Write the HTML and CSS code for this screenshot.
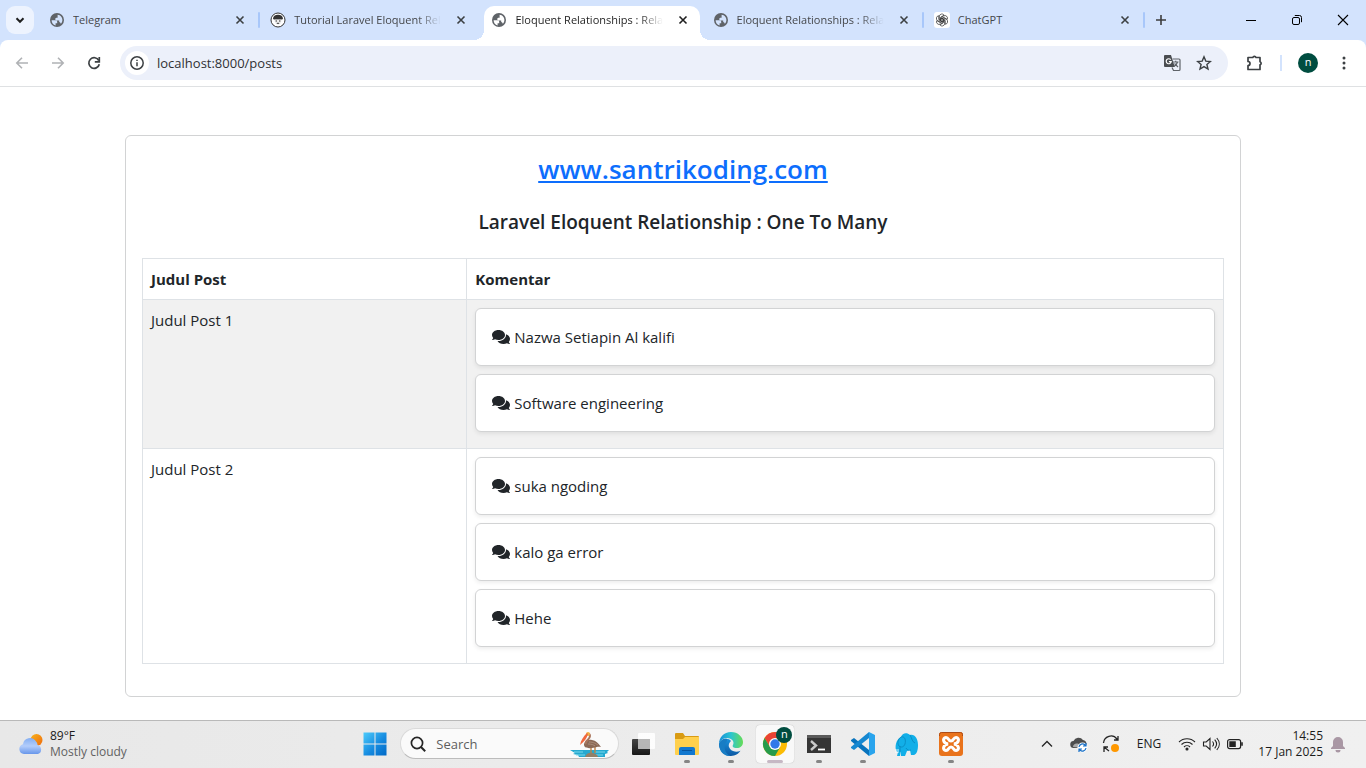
FILE: index.html
```html
<!DOCTYPE html>
<html lang="id">
<head>
<meta charset="utf-8">
<meta name="viewport" content="width=device-width, initial-scale=1">
<title>Eloquent Relationships : Relasi One To Many</title>
<link rel="stylesheet" href="styles.css">
</head>
<body>
<svg class="sprite" aria-hidden="true">
  <symbol id="globe" viewBox="0 0 16 16">
    <circle cx="8" cy="8" r="7" fill="#5f6368"/>
    <path d="M2.600 8.200h3.600c1.300 0 2 .7 2 1.800v1.200H6.600v2.200C4.300 13 2.600 10.800 2.600 8.200zM8.600 2.700c2.800.2 4.800 2.500 4.800 5.300 0 1.500-.6 2.900-1.500 3.800-.3-1.100-1-1.700-1.700-1.900V8.600H7.800c-1 0-1.600-.7-1.600-1.500s.7-1.400 1.500-1.400h.9z" fill="var(--cut)"/>
  </symbol>
  <symbol id="close" viewBox="0 0 16 16"><path d="M4.500 4.500l7 7m0-7l-7 7" stroke="currentColor" stroke-width="1.600" fill="none"/></symbol>
  <symbol id="comments" viewBox="0 0 576 512"><path fill="currentColor" d="M416 192c0-88.400-93.100-160-208-160S0 103.600 0 192c0 34.300 14.100 65.900 38 92-13.400 30.200-35.500 54.200-35.800 54.500-2.200 2.300-2.800 5.700-1.500 8.700S4.800 352 8 352c36.600 0 66.900-12.300 88.700-25 32.200 15.700 70.300 25 111.300 25 114.900 0 208-71.600 208-160zm122 220c23.900-26 38-57.700 38-92 0-66.900-53.500-124.200-129.300-148.100.9 6.600 1.300 13.300 1.300 20.100 0 105.900-107.700 192-240 192-10.800 0-21.300-.8-31.700-1.900C207.800 439.600 281.800 480 368 480c41 0 79.100-9.200 111.300-25 21.800 12.700 52.100 25 88.700 25 3.200 0 6.100-1.900 7.300-4.800 1.300-2.900.7-6.300-1.500-8.700-.3-.3-22.400-24.200-35.800-54.500z"/></symbol>
</svg>

<header class="browser">
  <div class="tabstrip">
    <button class="tab-search" aria-label="Search tabs"><svg width="14" height="14" viewBox="0 0 14 14"><path d="M3.500 5.300L7 8.800l3.500-3.500" fill="none" stroke="#1f1f1f" stroke-width="2"/></svg></button>
    <nav class="tabs" aria-label="Tabs">
      <div class="tab divided"><svg class="icon"><use href="#globe"/></svg><a class="tab-title" href="#">Telegram</a><button class="tab-close" aria-label="Close tab"><svg class="icon"><use href="#close"/></svg></button></div>
      <div class="tab"><svg class="icon" viewBox="0 0 16 16"><circle cx="8" cy="8" r="7" fill="#fff" stroke="#333" stroke-width="1"/><path d="M3 7c.2-3 2-4.300 5-4.300S12.800 4 13 7l-1.600.8H4.600z" fill="#333"/><path d="M4.400 7.500h7.200c0 3.300-1.400 5.200-3.600 5.200S4.400 10.800 4.400 7.500z" fill="#eee"/><circle cx="6.200" cy="9" r=".7" fill="#333"/><circle cx="9.800" cy="9" r=".7" fill="#333"/><path d="M6.800 11.300h2.400" stroke="#333"/></svg><a class="tab-title faded" href="#">Tutorial Laravel Eloquent Rel</a><button class="tab-close" aria-label="Close tab"><svg class="icon"><use href="#close"/></svg></button></div>
      <div class="tab active"><svg class="icon"><use href="#globe"/></svg><a class="tab-title faded" href="#" aria-current="page">Eloquent Relationships : Rela</a><button class="tab-close" aria-label="Close tab"><svg class="icon"><use href="#close"/></svg></button></div>
      <div class="tab divided"><svg class="icon"><use href="#globe"/></svg><a class="tab-title faded" href="#">Eloquent Relationships : Rela</a><button class="tab-close" aria-label="Close tab"><svg class="icon"><use href="#close"/></svg></button></div>
      <div class="tab divided"><svg class="icon" viewBox="0 0 16 16"><rect width="16" height="16" rx="3" fill="#fff"/><g fill="none" stroke="#333" stroke-width=".7"><path id="petal" d="M8 9.800L5.300 8.200V4.500a2.600 2.600 0 0 1 4.800-1.300L6.900 5v4.200"/><use href="#petal" transform="rotate(60 8 8)"/><use href="#petal" transform="rotate(120 8 8)"/><use href="#petal" transform="rotate(180 8 8)"/><use href="#petal" transform="rotate(240 8 8)"/><use href="#petal" transform="rotate(300 8 8)"/></g></svg><a class="tab-title" href="#">ChatGPT</a><button class="tab-close" aria-label="Close tab"><svg class="icon"><use href="#close"/></svg></button></div>
    </nav>
    <button class="new-tab" aria-label="New tab"><svg class="icon" viewBox="0 0 16 16"><path d="M8 3v10M3 8h10" stroke="#3c3c3c" stroke-width="1.600"/></svg></button>
    <div class="window-controls">
      <button aria-label="Minimize"><svg width="12" height="12" viewBox="0 0 12 12"><path d="M1 6.500h10" stroke="#000"/></svg></button>
      <button aria-label="Restore"><svg width="12" height="12" viewBox="0 0 12 12" fill="none" stroke="#000"><rect x="1.500" y="3.500" width="7" height="7" rx="1.500"/><path d="M3.800 1.500H8.500a2 2 0 0 1 2 2v4.700"/></svg></button>
      <button aria-label="Close window"><svg width="12" height="12" viewBox="0 0 12 12"><path d="M1 1l10 10M11 1L1 11" stroke="#000" stroke-width="1.100"/></svg></button>
    </div>
  </div>
  <div class="toolbar">
    <button class="nav-button" aria-label="Back" disabled><svg class="icon" viewBox="0 0 16 16"><path d="M14 8H3M8 2.800L2.800 8 8 13.200" fill="none" stroke="#b0b2b5" stroke-width="1.600"/></svg></button>
    <button class="nav-button" aria-label="Forward" disabled><svg class="icon" viewBox="0 0 16 16"><path d="M2 8h11M8 2.800L13.200 8 8 13.200" fill="none" stroke="#b0b2b5" stroke-width="1.600"/></svg></button>
    <button class="nav-button" aria-label="Reload"><svg class="icon" viewBox="0 0 16 16"><path d="M12.800 5.500A5.300 5.300 0 1 0 13.300 9.200" fill="none" stroke="#3c4043" stroke-width="1.700"/><path d="M13.300 2v4.800H8.800" fill="none" stroke="#3c4043" stroke-width="1.700"/></svg></button>
    <div class="omnibox">
      <button class="site-info" aria-label="Site information"><svg class="icon" viewBox="0 0 16 16"><circle cx="8" cy="8" r="6.200" fill="none" stroke="#3c4043" stroke-width="1.500"/><path d="M8 7.300v3.900M8 4.700v1.400" stroke="#3c4043" stroke-width="1.500"/></svg></button>
      <input class="address" type="text" value="localhost:8000/posts" aria-label="Address">
      <button class="omni-button" aria-label="Translate this page"><svg width="18" height="18" viewBox="0 0 18 18"><path d="M2 1h6l3.800 12H2a1 1 0 0 1-1-1V2a1 1 0 0 1 1-1z" fill="#4a4d51"/><path d="M7.700 5.700a2.500 2.500 0 1 0 .5 2H5.900" fill="none" stroke="#fff" stroke-width="1.200"/><path d="M9.500 5H16a1 1 0 0 1 1 1v9.500a1 1 0 0 1-1 1h-5.500L9 13.500M10 8h5.500M12.700 6.800V8M14.500 8c-.5 2-1.800 3.500-3.500 4.500M11.500 9.500l3.500 3.500" fill="none" stroke="#5f6368" stroke-width="1.200"/></svg></button>
      <button class="omni-button" aria-label="Bookmark this tab"><svg class="icon" viewBox="0 0 16 16"><path d="M8 1.800l1.800 4.300 4.600.4-3.500 3 1.100 4.500L8 11.600 4 14l1.100-4.500-3.500-3 4.600-.4z" fill="none" stroke="#3c4043" stroke-width="1.400"/></svg></button>
    </div>
    <button class="nav-button" aria-label="Extensions"><svg width="18" height="18" viewBox="0 0 18 18"><path d="M2 3.500h4.800a1.700 1.700 0 0 1 3.200 0h4v4.200a1.700 1.700 0 0 1 0 3.200V15.500H2v-4a2 2 0 0 0 0-4z" fill="none" stroke="#3c4043" stroke-width="1.700" stroke-linejoin="round"/></svg></button>
    <span class="toolbar-divider"></span>
    <button class="nav-button" aria-label="Profile"><span class="avatar">n</span></button>
    <button class="nav-button" aria-label="Menu"><svg class="icon" viewBox="0 0 16 16" fill="#3c4043"><circle cx="8" cy="3" r="1.500"/><circle cx="8" cy="8" r="1.500"/><circle cx="8" cy="13" r="1.500"/></svg></button>
  </div>
</header>

<main class="page">
  <section class="container">
    <div class="card">
      <h3 class="site-name"><a href="#">www.santrikoding.com</a></h3>
      <h5 class="subtitle">Laravel Eloquent Relationship : One To Many</h5>
      <table class="posts">
        <thead><tr><th class="post-column" scope="col">Judul Post</th><th scope="col">Komentar</th></tr></thead>
        <tbody>
          <tr><td>Judul Post 1</td><td>
            <div class="comment"><svg class="comment-icon"><use href="#comments"/></svg>Nazwa Setiapin Al kalifi</div>
            <div class="comment"><svg class="comment-icon"><use href="#comments"/></svg>Software engineering</div>
          </td></tr>
          <tr><td>Judul Post 2</td><td>
            <div class="comment"><svg class="comment-icon"><use href="#comments"/></svg>suka ngoding</div>
            <div class="comment"><svg class="comment-icon"><use href="#comments"/></svg>kalo ga error</div>
            <div class="comment"><svg class="comment-icon"><use href="#comments"/></svg>Hehe</div>
          </td></tr>
        </tbody>
      </table>
    </div>
  </section>
</main>

<footer class="taskbar">
  <button class="weather">
    <svg width="24" height="24" viewBox="0 0 24 24"><defs><linearGradient id="sun" x2="1" y2="1"><stop stop-color="#f8b31c"/><stop offset="1" stop-color="#ef6a0c"/></linearGradient><linearGradient id="cloud" x2="0" y2="1"><stop stop-color="#83aef2"/><stop offset=".5" stop-color="#b3cdfb"/><stop offset="1" stop-color="#6796ea"/></linearGradient></defs><circle cx="17.500" cy="8" r="6" fill="url(#sun)"/><path d="M5 22a5 5 0 0 1-1-9.800A7 7 0 0 1 17 9.500c1 1 1.500 2.200 1.500 3.500A4.700 4.700 0 0 1 19 22z" fill="url(#cloud)"/></svg>
    <span class="weather-text"><span>89°F</span><span class="weather-state">Mostly cloudy</span></span>
  </button>
  <nav class="apps" aria-label="Taskbar">
    <button class="app" aria-label="Start"><svg width="24" height="24" viewBox="0 0 24 24"><defs><linearGradient id="win" gradientUnits="userSpaceOnUse" x1="0" y1="0" x2="24" y2="24"><stop stop-color="#4fcdfc"/><stop offset=".55" stop-color="#168be0"/><stop offset="1" stop-color="#0067c5"/></linearGradient></defs><path d="M.5.500h11v11H.5zM12.500.5h11v11h-11zM.5 12.500h11v11H.5zM12.500 12.500h11v11h-11z" fill="url(#win)"/></svg></button>
    <label class="search"><svg class="icon" viewBox="0 0 16 16"><circle cx="7" cy="7" r="5.600" fill="none" stroke="#252525" stroke-width="1.700"/><path d="M11 11l4.200 4.200" stroke="#252525" stroke-width="2"/></svg><input type="search" placeholder="Search" aria-label="Search">
      <svg width="40" height="28" viewBox="0 0 40 28"><path d="M0 20h39l-2 2 1 1-3 1v3H9l-1-2-5-1 2-1z" fill="#25a9d0"/><path d="M4 22h9m12 0h10M6 25h9m11 0h7" stroke="#7bd9ec"/><path d="M15 27c1-4 5-5 8-4s5 2 5 4z" fill="#938068"/><path d="M21 16v7m4-6v6" stroke="#c18243" stroke-width="1.400"/><path d="M14 14c1-3 4-5 8-4 4 .5 6 3 9 7-3-.5-4 0-6 .5-5 1-8 1-10-.5-1-1-1-2-1-3z" fill="#8b6956"/><path d="M19 12c5 0 7 2 9 3m-10-1c4 0 6 1 7 2" fill="none" stroke="#b39582" stroke-width=".8"/><path d="M16 14c-2-3 4-4 4-8 0-2-2-3-3-1" fill="none" stroke="#a9745b" stroke-width="2"/><circle cx="18" cy="4" r="2" fill="#f2b347"/><path d="M18 4c-1 4-4 8-8 11 1-5 3-8 7-12z" fill="#f0683f"/></svg></label>
    <button class="app" aria-label="Task view"><svg width="26" height="26" viewBox="0 0 26 26"><defs><linearGradient id="task" y2="1" x2="0"><stop stop-color="#454545"/><stop offset="1" stop-color="#171717"/></linearGradient></defs><rect x="2" y="8" width="18" height="16" rx="1" fill="url(#task)"/><rect x="8" y="2" width="17" height="16" rx="1" fill="#fff" opacity=".86"/><path d="M8 8h12v10H8z" fill="#aaa" opacity=".8"/></svg></button>
    <button class="app running" aria-label="File Explorer"><svg width="26" height="26" viewBox="0 0 26 26"><path d="M1 3a1 1 0 0 1 1-1h7l2 3h13a1 1 0 0 1 1 1v5H1z" fill="#d99b13"/><path d="M1 8h8l2-2h14v17a1 1 0 0 1-1 1H2a1 1 0 0 1-1-1z" fill="#ffd04d"/><path d="M5 24v-6a2 2 0 0 1 2-2h12a2 2 0 0 1 2 2v6z" fill="#1278cf"/><path d="M8 19h10v1H8z" fill="#07559f"/></svg></button>
    <button class="app running" aria-label="Edge"><svg width="26" height="26" viewBox="0 0 26 26"><defs><linearGradient id="edge-top"><stop stop-color="#168ed9"/><stop offset=".5" stop-color="#2bc5d0"/><stop offset="1" stop-color="#66dc55"/></linearGradient><linearGradient id="edge-low" x2="0" y2="1"><stop stop-color="#1b91db"/><stop offset="1" stop-color="#0c59a4"/></linearGradient></defs><path d="M1 13a12 12 0 0 0 15 11.600c3-.8 5-2.600 6.500-4.900-5 2.200-10 .4-11.500-3.700-1-3 1-5 2-6-3-4-10-2-12 3z" fill="url(#edge-low)"/><path d="M1 13C1 6 6 1 13 1s12 5 12 10c0 4-3 6-6 6-4 0-5-1.500-4-3 2-4-2-7-6-7-4 0-7 3-8 6z" fill="url(#edge-top)"/><path d="M9 10c-4 4-3 12 3 14.800-5 1-11-4-11-11.800C2 9 6 7 9 8z" fill="#187dc4"/></svg></button>
    <button class="app running current" aria-label="Chrome"><svg width="26" height="26" viewBox="0 0 26 26"><circle cx="13" cy="13" r="12" fill="#fbbc05"/><path d="M2.600 7A12 12 0 0 1 23.400 7H13L8 16z" fill="#ea4335"/><path d="M2.600 7A12 12 0 0 0 13 25l5.200-9H8z" fill="#279b4b"/><circle cx="13" cy="13" r="6" fill="#fff"/><circle cx="13" cy="13" r="4.700" fill="#3179e9"/></svg><span class="app-badge">n</span></button>
    <button class="app running" aria-label="Terminal"><svg width="26" height="26" viewBox="0 0 26 26"><path d="M1 5a1 1 0 0 1 1-1h22a1 1 0 0 1 1 1v17H1z" fill="#353535"/><path d="M1 4h24v3H1z" fill="#5a5a5a"/><path d="M5 10l5 4.500L5 19" fill="none" stroke="#c9c9c9" stroke-width="2.400"/><path d="M12 18.500h7" stroke="#fff" stroke-width="1.800"/></svg></button>
    <button class="app running" aria-label="Visual Studio Code"><svg width="26" height="26" viewBox="0 0 26 26"><path d="M19 1l6 3v18l-6 3z" fill="#29a4ed"/><path d="M1 9l3-2 15 12v6L1 10z" fill="#0873bd"/><path d="M1 17l3 2L19 7V1L1 16z" fill="#1688d1"/></svg></button>
    <button class="app" aria-label="HeidiSQL"><svg width="26" height="26" viewBox="0 0 26 26"><path d="M3 21C0 17 2 8 7 6c1-4 6-5 9-2 5-1 8 4 8 10 0 5-1 9-4 10h-3l-1-5-3 1-2 5H7v-5l-1 5H3l1-4z" fill="#12afe8"/><path d="M7 6c4-1 5 3 4 7-1 3-4 4-6 2-2-3-1-7 2-9zm9-2c2 3 2 7 5 8M6 15v6m6-4c1 2 3 3 5 2" fill="none" stroke="#0787bc" stroke-width=".8"/><path d="M2 18v4m2-4v4" stroke="#fff" stroke-width=".8"/></svg></button>
    <button class="app running" aria-label="XAMPP"><svg width="26" height="26" viewBox="0 0 26 26"><rect x="1" y="1" width="24" height="24" rx="3" fill="#e9731c"/><path d="M1.500 5V3.500a2 2 0 0 1 2-2h19a2 2 0 0 1 2 2V5" fill="none" stroke="#ad4b16"/><path d="M10 13C5 12 4 7 8 6.500c3 0 2 3.500 5 3.500s2-3.500 5-3.500c4 .5 3 5.500-2 6.500 5 1 6 6 2 6.500-3 0-2-3.500-5-3.500s-2 3.500-5 3.500c-4-.5-3-5.500 2-6.500z" fill="none" stroke="#fff" stroke-width="3"/></svg></button>
  </nav>
  <div class="tray">
    <button class="tray-button" aria-label="Show hidden icons"><svg width="12" height="12" viewBox="0 0 12 12"><path d="M1 8.500l5-5 5 5" fill="none" stroke="#252525" stroke-width="1.300"/></svg></button>
    <button class="tray-button" aria-label="OneDrive"><svg width="18" height="18" viewBox="0 0 18 18"><path d="M4 13a3.500 3.500 0 0 1-.5-7A5.500 5.500 0 0 1 13 5c2 .2 3.500 2 3.500 4v4z" fill="#4d4d4d"/><path d="M3 12c0-3 4-5 7-2l4 3z" fill="#aaa"/><circle cx="12.500" cy="12.500" r="5" fill="#fff"/><path d="M9 12a3.500 3.500 0 0 1 6-2l1 1m0-3v3h-3m3 2a3.500 3.500 0 0 1-6 2l-1-1m0 3v-3h3" fill="none" stroke="#176fc6" stroke-width="1.200"/></svg></button>
    <button class="tray-button" aria-label="Update available"><svg width="18" height="18" viewBox="0 0 18 18"><path d="M1.500 8A7.500 7.500 0 0 1 15 4l1 1m0-4v4h-4M7 16l-5-4m0 5v-5h4" fill="none" stroke="#252525" stroke-width="1.300"/><circle cx="13" cy="13" r="4" fill="#ff9800"/></svg></button>
    <button class="language">ENG</button>
    <button class="status" aria-label="Network, volume and battery">
      <svg width="18" height="18" viewBox="0 0 18 18" fill="none" stroke="#222" stroke-width="1.100"><path d="M1 7a11.400 11.400 0 0 1 16 0M3.500 9.500a7.800 7.800 0 0 1 11 0M6 12a4.300 4.300 0 0 1 6 0"/><circle cx="9" cy="14" r="1" fill="#222"/></svg>
      <svg width="18" height="18" viewBox="0 0 18 18" fill="none" stroke="#222" stroke-width="1.100"><path d="M1.500 7h2.700L8 3.500v11L4.200 11H1.500zM10.500 6.500c1.300 1.500 1.300 3.500 0 5M12.700 4.700c2.300 2.600 2.300 6 0 8.600M14.800 3c3.300 3.600 3.300 8.400 0 12"/></svg>
      <svg width="18" height="18" viewBox="0 0 18 18"><rect x="1.600" y="4.600" width="13" height="9" rx="2" fill="none" stroke="#222" stroke-width="1.200"/><path d="M3.300 6.300h6.500v5.600H3.300zM15.200 7.200h1.600v3.600h-1.600z" fill="#222"/></svg>
    </button>
    <button class="clock"><span>14:55</span><span>17 Jan 2025</span></button>
    <button class="bell" aria-label="Notifications"><svg width="16" height="18" viewBox="0 0 16 18"><path d="M3 11V7a5 5 0 0 1 10 0v4l2 2v1H1v-1zM5.500 15h5a2.500 2.500 0 0 1-5 0z" fill="#a997a4"/></svg></button>
  </div>
</footer>
</body>
</html>
```
FILE: styles.css
```css
* {
  box-sizing: border-box;
}

body {
  display: flex;
  flex-direction: column;
  min-height: 100vh;
  margin: 0;
  background: #fff;
  color: #212529;
  font: 15px/24px "Open Sans", "Noto Sans", sans-serif;
}

button {
  display: flex;
  align-items: center;
  justify-content: center;
  flex-shrink: 0;
  padding: 0;
  border: 0;
  background: none;
  color: inherit;
  font: inherit;
}

input {
  min-width: 0;
  border: 0;
  outline: 0;
  background: none;
  font: inherit;
}

svg {
  flex-shrink: 0;
}

.sprite {
  display: none;
}

.icon {
  display: block;
  width: 16px;
  height: 16px;
}

/* Browser frame */
.browser {
  background: #d3e3fd;
}

.tabstrip {
  display: flex;
  align-items: stretch;
  height: 40px;
  padding-left: 6px;
  font-size: 11px;
  line-height: 16px;
}

.tab-search {
  align-self: center;
  width: 28px;
  height: 28px;
  margin-right: 6px;
  border-radius: 9px;
  background: #edf3fe;
}

.tabs {
  display: flex;
  flex: 0 1 1106px;
  min-width: 0;
}

.tab {
  --cut: #d3e3fd;
  position: relative;
  display: flex;
  flex: 1;
  align-items: center;
  gap: 8px;
  min-width: 0;
  margin: 6px 4px 0 2px;
  padding: 0 9px 6px 7px;
  color: #45474a;
}

.tab-title {
  flex: 1;
  overflow: hidden;
  color: inherit;
  text-decoration: none;
  white-space: nowrap;
}

.faded {
  mask-image: linear-gradient(to right, #000 calc(100% - 28px), transparent calc(100% - 4px));
}

.tab-close {
  color: #3c4043;
}

.divided::after {
  content: "";
  position: absolute;
  top: 6px;
  right: -3px;
  width: 2px;
  height: 16px;
  border-radius: 1px;
  background: #a8c7fa;
}

.active {
  --cut: #fff;
  border-radius: 10px 10px 0 0;
  background: #fff;
  color: #1f1f1f;
}

.active .tab-close {
  color: #1f1f1f;
}

.active::before,
.active::after {
  content: "";
  position: absolute;
  bottom: 0;
  width: 10px;
  height: 10px;
}

.active::before {
  right: 100%;
  background: radial-gradient(circle at 0 0, transparent 10px, #fff 10px);
}

.active::after {
  left: 100%;
  background: radial-gradient(circle at 100% 0, transparent 10px, #fff 10px);
}

.new-tab {
  width: 30px;
}

.window-controls {
  display: flex;
  margin-left: auto;
}

.window-controls button {
  width: 46px;
}

.toolbar {
  display: flex;
  align-items: center;
  height: 47px;
  padding: 0 4px;
  border-bottom: 1px solid #dfe1e3;
  border-radius: 8px 8px 0 0;
  background: #fff;
}

.nav-button {
  width: 36px;
  height: 34px;
}

.omnibox {
  display: flex;
  flex: 1;
  align-items: center;
  height: 34px;
  min-width: 0;
  margin: 0 9px 0 8px;
  padding: 0 8px 0 5px;
  border-radius: 17px;
  background: #ecf0fa;
  font-size: 13px;
  line-height: 20px;
}

.site-info {
  width: 24px;
  height: 24px;
  border-radius: 50%;
  background: #fff;
}

.address {
  flex: 1;
  padding: 0 8px;
  color: #303134;
}

.omni-button {
  width: 32px;
  height: 32px;
}

.toolbar-divider {
  width: 2px;
  height: 16px;
  margin: 0 8px 0 7px;
  background: #d3e3fd;
}

.avatar {
  width: 20px;
  height: 20px;
  border-radius: 50%;
  background: #004d40;
  color: #fff;
  font-size: 11px;
  line-height: 18px;
}

/* Page content */
.page {
  flex: 1;
  padding: 48px 0 23px;
}

.container {
  max-width: 1140px;
  margin: 0 auto;
  padding: 0 12px;
}

.card {
  padding: 16px;
  border: 1px solid #d2d3d4;
  border-radius: 6px;
}

.site-name {
  margin: 0 0 24px;
  font-size: 26px;
  font-weight: 600;
  line-height: 34px;
  text-align: center;
}

.site-name a {
  color: #0d6efd;
}

.subtitle {
  margin: 0 0 24px;
  font-size: 19px;
  font-weight: 600;
  line-height: 24px;
  text-align: center;
}

.posts {
  width: 100%;
  margin-bottom: 16px;
  border-collapse: collapse;
}

.posts th,
.posts td {
  padding: 8px;
  border: 1px solid #dee2e6;
  text-align: left;
  vertical-align: top;
}

.post-column {
  width: 30%;
}

.posts tbody tr:nth-child(odd) {
  background: #f1f1f1;
}

.comment {
  display: flex;
  align-items: center;
  gap: 4px;
  margin-bottom: 8px;
  padding: 16px;
  border: 1px solid #d2d3d4;
  border-radius: 6px;
  background: #fff;
  box-shadow: 0 2px 4px rgba(0, 0, 0, 0.075);
}

.comment-icon {
  width: 18px;
  height: 16px;
}

/* Taskbar */
.taskbar {
  display: grid;
  grid-template-columns: 9fr auto 10fr;
  height: 48px;
  padding-bottom: 2px;
  border-top: 1px solid #b9b9b9;
  background: linear-gradient(to right, #e8e8e8, #f0f0f0);
  font-size: 12px;
  line-height: 16px;
}

.weather {
  justify-self: start;
  gap: 7px;
  padding-left: 19px;
  color: #1b1b1b;
}

.weather-text,
.clock {
  display: flex;
  flex-direction: column;
}

.weather-text {
  align-items: flex-start;
}

.weather-state {
  color: #626262;
}

.apps {
  display: flex;
  align-items: center;
}

.app {
  position: relative;
  width: 44px;
  height: 44px;
}

.running::after {
  content: "";
  position: absolute;
  bottom: 3px;
  left: calc(50% - 3px);
  width: 6px;
  height: 3px;
  border-radius: 2px;
  background: #858585;
}

.current {
  width: 38px;
  height: 38px;
  margin: 0 3px;
  border-radius: 4px;
  background: #f9f9f9;
  box-shadow: 0 0 1px #aaa;
}

.current::after {
  bottom: 0;
  left: calc(50% - 8px);
  width: 16px;
  background: #c6b8c4;
}

.app-badge {
  position: absolute;
  top: 2px;
  right: 2px;
  width: 16px;
  height: 16px;
  border-radius: 50%;
  background: #004d40;
  color: #fff;
  font-size: 11px;
  line-height: 14px;
}

.search {
  display: flex;
  align-items: center;
  width: 219px;
  height: 31px;
  margin: 0 2px 0 3px;
  padding: 0 8px 0 9px;
  border: 1px solid #dadada;
  border-bottom-color: #bcbcbc;
  border-radius: 16px;
  background: #fafafa;
}

.search input {
  flex: 1;
  padding: 0 10px;
  font-size: 13px;
  line-height: 20px;
}

.search input::placeholder {
  color: #5e5e5e;
}

.tray {
  display: flex;
  justify-content: flex-end;
  padding-right: 20px;
  color: #1b1b1b;
}

.tray-button {
  width: 32px;
}

.language {
  width: 44px;
}

.status {
  gap: 6px;
  padding: 0 7px;
}

.clock {
  align-items: flex-end;
  width: 72px;
}

.bell {
  margin-left: 7px;
}
```
